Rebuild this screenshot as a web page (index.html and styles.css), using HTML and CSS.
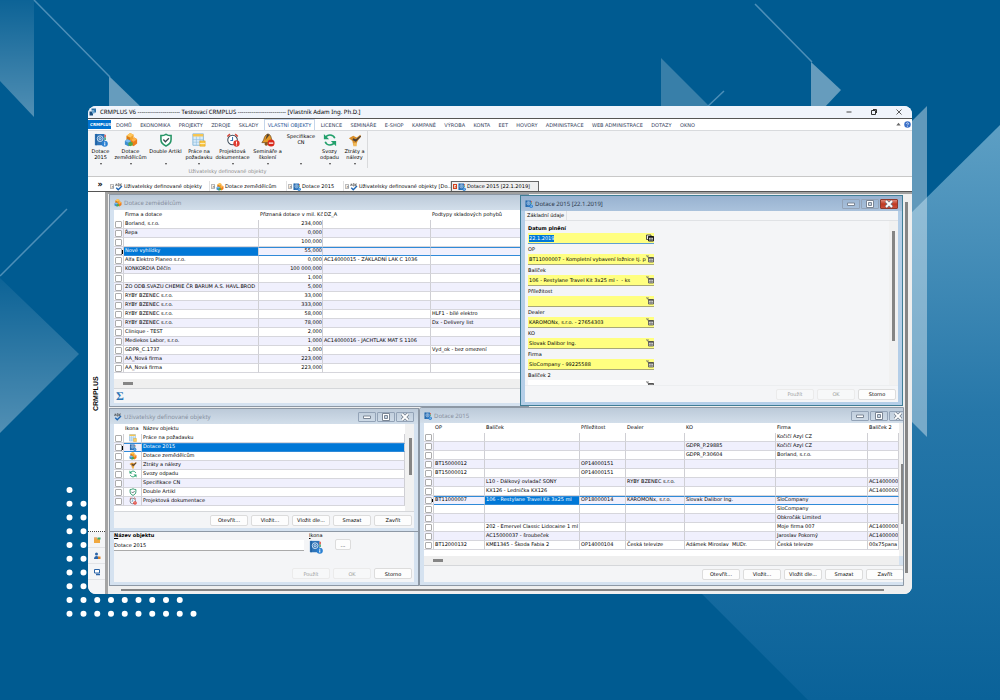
FILE: index.html
```html
<!DOCTYPE html>
<html lang="cs">
<head>
    <meta charset="utf-8">
    <title>CRMPLUS V6</title>
    <link rel="stylesheet" href="styles.css">
</head>
<body>

<!-- icons -->
<svg class="defs" aria-hidden="true">
    <symbol id="book" viewBox="0 0 16 16">
        <path d="M1 1h11v13H1z" fill="#2f74b8"/>
        <path d="M2.500 1v13" stroke="#1d5a98"/>
        <path d="M12 2h1.500v3H12z" fill="#e0493a"/><path d="M12 5h1.500v3H12z" fill="#3aa76d"/>
        <circle cx="7" cy="6.500" r="3.300" fill="none" stroke="#dbe9f7" stroke-width="1"/>
        <circle cx="7" cy="6.500" r="1.300" fill="none" stroke="#dbe9f7"/>
        <circle cx="12.300" cy="12.300" r="3.500" fill="#2a80d2"/>
        <path d="M12.300 10v1M12.300 11.800v2.500" stroke="#fff" stroke-width="1.200"/>
    </symbol>
    <symbol id="cubes" viewBox="0 0 16 16">
        <path d="M3 3l4-3 4 2v6l-4 3-4-2z" fill="#f0a22e"/><path d="M3 3l4 2v6L3 9z" fill="#d97a16"/><path d="M3 3l4-3 4 2-4 3z" fill="#ffc65c"/>
        <path d="M1 9l3-2 4 2v5l-3 1-4-2z" fill="#3d8fd1"/><path d="M1 9l3-2 4 2-3 2z" fill="#7cbcf0"/>
        <path d="M8 8l4-3 3 2v5l-4 3-3-2z" fill="#ee7d1c"/><path d="M8 8l4-3 3 2-4 3z" fill="#ffb347"/>
        <path d="M5 11l3-1 2 1v3l-3 1-2-1z" fill="#57a845"/>
    </symbol>
    <symbol id="shield" viewBox="0 0 16 16">
        <path d="M8 1.500c2 1.300 4 1.500 5.800 1.500v4.500c0 3.500-2.500 6-5.800 7.300C4.700 13.500 2.200 11 2.200 7.500V3C4 3 6 2.800 8 1.500z" fill="#fff" stroke="#279566" stroke-width="1.800"/>
        <path d="M5 7.500l2.300 2.500L11.300 6" fill="none" stroke="#3b4a50" stroke-width="1.500"/>
    </symbol>
    <symbol id="report" viewBox="0 0 16 16">
        <path d="M1 1h12v13H1z" fill="#d9ecfa" stroke="#7fb3d8"/>
        <path d="M1 1h12v3H1z" fill="#f6c552"/>
        <path d="M1 7.500h12M1 10.500h12M5 4v10M9 4v10" stroke="#8fbfe0" stroke-width=".7"/>
        <path d="M9 9h6v6H9z" fill="#f9c846" stroke="#dfa323" stroke-width=".7"/><path d="M9 12h6" stroke="#fff" stroke-width=".7"/>
    </symbol>
    <symbol id="clock" viewBox="0 0 16 16">
        <circle cx="7.500" cy="8" r="5.500" fill="#fff" stroke="#3f4c5a" stroke-width="1.200"/>
        <path d="M1.500 4L4.500 1.300M10.500 1.300L13.500 4" stroke="#d64a3c" stroke-width="1.800"/>
        <path d="M7.500 4.500v4H5" fill="none" stroke="#2f77b5" stroke-width="1.200"/>
        <circle cx="12" cy="12" r="3.600" fill="#e03c31"/><path d="M12 9.800v2.500M12 13v1.200" stroke="#fff" stroke-width="1.200"/>
    </symbol>
    <symbol id="bell" viewBox="0 0 16 16">
        <path d="M8 1c3 1 3.500 3 4 6l2 4H1l2-3c1-4 2-6 5-7z" fill="#e69a26" stroke="#6b4517" stroke-width=".8"/>
        <path d="M7 1l3 1-5 6z" fill="#54422e"/>
        <circle cx="6" cy="12.500" r="2" fill="#8a5a1c"/>
        <circle cx="11.500" cy="11.500" r="4" fill="#d8291c"/><path d="M9 11.500h5" stroke="#fff" stroke-width="1.500"/>
    </symbol>
    <symbol id="recycle" viewBox="0 0 16 16">
        <path d="M13.500 6C12.500 3.500 10.500 2.300 8 2.300S3.800 3.500 2.800 5.500M2.500 10c1 2.500 3 3.700 5.500 3.700s4.200-1.200 5.200-3.200" fill="none" stroke="#22a06b" stroke-width="1.800"/>
        <path d="M1 1v6h6zM15 15V9H9z" fill="#22a06b"/>
    </symbol>
    <symbol id="hand" viewBox="0 0 16 16">
        <path d="M1 6l5-3 4 2 4-3 1 2-4 5-2 5H6L5 9z" fill="#d98f2b"/>
        <path d="M6 6l3 1 5-4 1 1-6 6-4-2z" fill="#4b4038"/>
        <path d="M6 11h4v4H6z" fill="#f0b95a"/>
    </symbol>
    <symbol id="abc" viewBox="0 0 16 16">
        <path d="M1 6l1.500-4.500L4 6M6 1.500V6h2.500V1.500zM14 2h-3v4h3" fill="none" stroke="#222" stroke-width="1"/>
        <path d="M2.500 9.500l4 4L14 6" fill="none" stroke="#1e66b4" stroke-width="2.800"/>
    </symbol>
    <symbol id="pick" viewBox="0 0 16 16">
        <path d="M1 1l4 5M1 2h5" stroke="#666" stroke-width="1.500" fill="none"/>
        <path d="M5 5h10v9H5z" fill="#ddd" stroke="#444" stroke-width="1.500"/><path d="M5 6h10" stroke="#444" stroke-width="2.500"/>
        <path d="M6 11h8M8.500 8v6M11.500 8v6" stroke="#666"/>
    </symbol>
    <symbol id="date" viewBox="0 0 16 16">
        <path d="M1 2h9v9H1z" fill="#eee" stroke="#222" stroke-width="1.500"/>
        <path d="M5 5h10v9H5z" fill="#ddd" stroke="#111" stroke-width="1.800"/><path d="M5 6h10" stroke="#111" stroke-width="3"/>
        <path d="M6 11.500h8M8.500 8v6M11.500 8v6" stroke="#333"/>
    </symbol>
    <symbol id="min" viewBox="0 0 16 8"><path d="M4.500 3h7v2.500h-7z" fill="#fff" stroke="#7b8695"/></symbol>
    <symbol id="max" viewBox="0 0 16 8"><path d="M4.500 .5h7v7h-7z" fill="#fff" stroke="#7b8695"/><path d="M6.500 2.500h3v3h-3z" fill="#c9d6e4" stroke="#7b8695"/></symbol>
    <symbol id="close" viewBox="0 0 16 8"><path d="M5 1l6 6M11 1l-6 6" stroke="#6d7886" stroke-width="3.200"/><path d="M5 1l6 6M11 1l-6 6" stroke="#fff" stroke-width="1.900"/></symbol>
</svg>

<!-- backdrop -->
<svg class="backdrop" viewBox="0 0 1000 700" preserveAspectRatio="xMidYMid slice" aria-hidden="true">
    <defs>
        <linearGradient id="fadeUp" x1="0" y1="0" x2="0" y2="1"><stop offset="0" stop-color="#fff" stop-opacity=".05"/><stop offset="1" stop-color="#fff" stop-opacity=".32"/></linearGradient>
        <linearGradient id="big" x1="0" y1="0" x2="0" y2="1"><stop offset="0" stop-color="#5d9fc4"/><stop offset=".5" stop-color="#2677a9"/><stop offset="1" stop-color="#0a6299"/></linearGradient>
    </defs>
    <path d="M0 0h34v117L0 81z" fill="url(#fadeUp)"/>
    <path d="M109 76l33 32h-33z" fill="#fff" fill-opacity=".4"/>
    <path d="M0 278l79 76-79 79z" fill="url(#fadeUp)"/>
    <path d="M661 58l49 49h-49z" fill="#fff" fill-opacity=".22"/>
    <path d="M811 62l30 28-17 18h-13z" fill="#fff" fill-opacity=".4"/>
    <path d="M1000 125L702 420v174l106 106h192z" fill="url(#big)"/>
    <path d="M927 106v331l-20-20V126z" fill="#fff" fill-opacity=".38"/>
    <path d="M34 0l76 77M0 276l67-67M755 4l57 58M706 108l18-17" fill="none" stroke="#4d8fb8" stroke-width="1.500"/>
    <g stroke="#fff" stroke-width="6" stroke-linecap="round" stroke-dasharray="0 13.750" fill="none">
        <path d="M69.500 490v125"/><path d="M83.500 503.750v112"/>
        <path d="M97.250 600h86"/><path d="M97.250 613.750h100"/>
    </g>
</svg>

<main class="app">
    <header class="titlebar">
        <svg class="logo" viewBox="0 0 16 16"><path d="M5 1h9v8h-4V5H5z" fill="#2a6fa5"/><path d="M1 7h7v8H1z" fill="#1b4f80"/><path d="M6 5h5v6H6z" fill="#6fa9d4"/></svg>
        <span class="caption">CRMPLUS V6 ---------------------- Testovací CRMPLUS ------------------------- [Vlastník Adam Ing. Ph.D.]</span>
        <button aria-label="Minimalizovat"><svg viewBox="0 0 8 8"><path d="M1.500 4h5" stroke="#444"/></svg></button>
        <button aria-label="Obnovit"><svg viewBox="0 0 8 8"><path d="M1.500 2.500h4v4h-4zM3 1.500h3.500V5" fill="none" stroke="#333"/></svg></button>
        <button aria-label="Zavřít"><svg viewBox="0 0 8 8"><path d="M1.500 1.500l5 5M6.500 1.500l-5 5" stroke="#333" stroke-width=".8"/></svg></button>
    </header>

    <nav class="menu">
        <a class="file" href="#">CRMPLUS</a>
        <div class="items">
            <a href="#">DOMŮ</a>
            <a href="#">EKONOMIKA</a>
            <a href="#">PROJEKTY</a>
            <a href="#">ZDROJE</a>
            <a href="#">SKLADY</a>
            <a class="active" href="#">VLASTNÍ OBJEKTY</a>
            <a href="#">LICENCE</a>
            <a href="#">SEMINÁŘE</a>
            <a href="#">E-SHOP</a>
            <a href="#">KAMPANĚ</a>
            <a href="#">VÝROBA</a>
            <a href="#">KONTA</a>
            <a href="#">EET</a>
            <a href="#">HOVORY</a>
            <a href="#">ADMINISTRACE</a>
            <a href="#">WEB ADMINISTRACE</a>
            <a href="#">DOTAZY</a>
            <a href="#">OKNO</a>
        </div>
        <span class="help">
            <svg viewBox="0 0 8 8"><path d="M1.500 5L4 2l2.500 3z" fill="#666"/></svg>
            <svg viewBox="0 0 8 8"><circle cx="4" cy="4" r="3.700" fill="#3a70c8"/><path d="M2.800 3.200c0-1.600 2.400-1.500 2.400 0 0 .8-1.200.8-1.200 1.700M4 5.600v.9" fill="none" stroke="#fff" stroke-width=".8"/></svg>
        </span>
    </nav>

    <section class="ribbon">
        <div class="group">
            <div class="tools">
                <button class="w24"><svg><use href="#book"/></svg><span>Dotace<br>2015</span><i></i></button>
                <button class="w36"><svg><use href="#cubes"/></svg><span>Dotace<br>zemědělcům</span><i></i></button>
                <button class="w36"><svg><use href="#shield"/></svg><span>Double Artikl</span><i></i></button>
                <button class="w32"><svg><use href="#report"/></svg><span>Práce na<br>požadavku</span><i></i></button>
                <button class="w36"><svg><use href="#clock"/></svg><span>Projektová<br>dokumentace</span><i></i></button>
                <button class="w36"><svg><use href="#bell"/></svg><span>Semináře a<br>školení</span><i></i></button>
                <button class="w32"><span>Specifikace<br>CN</span><i></i></button>
                <button class="w24"><svg><use href="#recycle"/></svg><span>Svozy<br>odpadu</span><i></i></button>
                <button class="w24"><svg><use href="#hand"/></svg><span>Ztráty a<br>nálezy</span><i></i></button>
            </div>
            <div class="groupname">Uživatelsky definované objekty</div>
        </div>
    </section>

    <nav class="doctabs">
        <button class="expand" aria-label="Rozbalit">»</button>
        <a class="t1" href="#"><b>×</b><svg><use href="#abc"/></svg>Uživatelsky definované objekty</a>
        <a class="t2" href="#"><b>×</b><svg><use href="#cubes"/></svg>Dotace zemědělcům</a>
        <a class="t3" href="#"><b>×</b><svg><use href="#book"/></svg>Dotace 2015</a>
        <a class="t4" href="#"><b>×</b><svg><use href="#abc"/></svg>Uživatelsky definované objekty [Do...</a>
        <a class="t5 active" href="#"><b>×</b><svg><use href="#book"/></svg>Dotace 2015 [22.1.2019]</a>
    </nav>

    <div class="body">
        <aside class="side">
            <div class="sidename">CRMPLUS</div>
            <button aria-label="Složky"><svg viewBox="0 0 8 8"><path d="M1 2.500h6V7H1z" fill="#f0a840"/><path d="M1 1.500h3v1H1z" fill="#d9822b"/><path d="M4.500 1.500h3v2h-3z" fill="#3aa76d"/></svg></button>
            <button aria-label="Kontakty"><svg viewBox="0 0 8 8"><circle cx="3.500" cy="2" r="1.500" fill="#2c65a8"/><path d="M1 7c0-4 5-4 5 0z" fill="#2c65a8"/><path d="M5 4.500h2.500V7H5z" fill="#d9822b"/></svg></button>
            <button aria-label="Počítač"><svg viewBox="0 0 8 8"><path d="M1.500 1.500h5v3.500h-5z" fill="#fff" stroke="#2c65a8"/><path d="M3 6.500h4" stroke="#2c65a8" stroke-width="1.500"/></svg></button>
            <div class="sideend"></div>
        </aside>

        <div class="desktop">
            <div class="vbar"></div>
            <div class="hbar"></div>

            <section class="win farms">
                <h2><svg><use href="#cubes"/></svg>Dotace zemědělcům</h2>
                <div class="pane">
                    <table>
                        <colgroup><col class="c10"><col class="c135"><col class="c64"><col class="c108"><col></colgroup>
                        <thead><tr><th></th><th>Firma a dotace</th><th class="num">Přiznaná dotace v mil. Kč</th><th>DZ_A</th><th>Podtypy skladových pohybů</th></tr></thead>
                        <tbody>
                            <tr><td><input type="checkbox" aria-label="Vybrat"></td><td>Borland, s.r.o.</td><td class="num">234,000</td><td></td><td></td></tr>
                            <tr><td><input type="checkbox" aria-label="Vybrat"></td><td>Řepa</td><td class="num">0,000</td><td></td><td></td></tr>
                            <tr><td><input type="checkbox" aria-label="Vybrat"></td><td></td><td class="num">100,000</td><td></td><td></td></tr>
                            <tr class="cur"><td><input type="checkbox" aria-label="Vybrat"></td><td class="sel">Nové vyhlídky</td><td class="num">55,000</td><td></td><td></td></tr>
                            <tr><td><input type="checkbox" aria-label="Vybrat"></td><td>Alfa Elektro Planeo s.r.o.</td><td class="num">0,000</td><td>AC14000015 - ZÁKLADNÍ LAK C 1036</td><td></td></tr>
                            <tr><td><input type="checkbox" aria-label="Vybrat"></td><td>KONKORDIA Děčín</td><td class="num">100 000,000</td><td></td><td></td></tr>
                            <tr><td><input type="checkbox" aria-label="Vybrat"></td><td></td><td class="num">1,000</td><td></td><td></td></tr>
                            <tr><td><input type="checkbox" aria-label="Vybrat"></td><td>ZO ODB.SVAZU CHEMIE ČR BARUM A.S. HAVL.BROD</td><td class="num">5,000</td><td></td><td></td></tr>
                            <tr><td><input type="checkbox" aria-label="Vybrat"></td><td>RYBY BZENEC s.r.o.</td><td class="num">33,000</td><td></td><td></td></tr>
                            <tr><td><input type="checkbox" aria-label="Vybrat"></td><td>RYBY BZENEC s.r.o.</td><td class="num">333,000</td><td></td><td></td></tr>
                            <tr><td><input type="checkbox" aria-label="Vybrat"></td><td>RYBY BZENEC s.r.o.</td><td class="num">58,000</td><td></td><td>HLF1 - bílé elektro</td></tr>
                            <tr><td><input type="checkbox" aria-label="Vybrat"></td><td>RYBY BZENEC s.r.o.</td><td class="num">78,000</td><td></td><td>Dx - Delivery list</td></tr>
                            <tr><td><input type="checkbox" aria-label="Vybrat"></td><td>Clinique - TEST</td><td class="num">2,000</td><td></td><td></td></tr>
                            <tr><td><input type="checkbox" aria-label="Vybrat"></td><td>Mediekos Labor, s.r.o.</td><td class="num">1,000</td><td>AC14000016 - JACHTLAK MAT S 1106</td><td></td></tr>
                            <tr><td><input type="checkbox" aria-label="Vybrat"></td><td>GDPR_C.1737</td><td class="num">1,000</td><td></td><td>Vyd_ok - bez omezení</td></tr>
                            <tr><td><input type="checkbox" aria-label="Vybrat"></td><td>AA_Nová firma</td><td class="num">223,000</td><td></td><td></td></tr>
                            <tr><td><input type="checkbox" aria-label="Vybrat"></td><td>AA_Nová firma</td><td class="num">223,000</td><td></td><td></td></tr>
                        </tbody>
                    </table>
                </div>
                <div class="scroll"></div>
                <footer class="sum">Σ</footer>
            </section>

            <section class="win detail">
                <div class="pane edit">
                    <div class="pair">
                        <label for="objname"><u>N</u>ázev objektu</label>
                        <input type="text" id="objname" value="Dotace 2015">
                    </div>
                    <div class="pair">
                        <span><u>I</u>kona</span>
                        <svg><use href="#book"/></svg>
                    </div>
                    <button class="btn dots">...</button>
                </div>
                <footer>
                    <button class="btn" disabled>Použít</button>
                    <button class="btn" disabled>OK</button>
                    <button class="btn">Storno</button>
                </footer>
            </section>

            <section class="win objects">
                <h2><svg><use href="#abc"/></svg>Uživatelsky definované objekty
                    <span class="ctl"><button aria-label="Minimalizovat"><svg><use href="#min"/></svg></button><button aria-label="Maximalizovat"><svg><use href="#max"/></svg></button><button aria-label="Zavřít"><svg><use href="#close"/></svg></button></span>
                </h2>
                <div class="pane">
                    <table>
                        <colgroup><col class="c10"><col class="c18"><col></colgroup>
                        <thead><tr><th></th><th>Ikona</th><th>Název objektu</th></tr></thead>
                        <tbody>
                            <tr><td><input type="checkbox" aria-label="Vybrat"></td><td class="ico"><svg><use href="#report"/></svg></td><td>Práce na požadavku</td></tr>
                            <tr class="cur"><td><input type="checkbox" aria-label="Vybrat"></td><td class="ico"><svg><use href="#book"/></svg></td><td class="sel">Dotace 2015</td></tr>
                            <tr><td><input type="checkbox" aria-label="Vybrat"></td><td class="ico"><svg><use href="#cubes"/></svg></td><td>Dotace zemědělcům</td></tr>
                            <tr><td><input type="checkbox" aria-label="Vybrat"></td><td class="ico"><svg><use href="#hand"/></svg></td><td>Ztráty a nálezy</td></tr>
                            <tr><td><input type="checkbox" aria-label="Vybrat"></td><td class="ico"><svg><use href="#recycle"/></svg></td><td>Svozy odpadu</td></tr>
                            <tr><td><input type="checkbox" aria-label="Vybrat"></td><td class="ico"></td><td>Specifikace CN</td></tr>
                            <tr><td><input type="checkbox" aria-label="Vybrat"></td><td class="ico"><svg><use href="#shield"/></svg></td><td>Double Artikl</td></tr>
                            <tr><td><input type="checkbox" aria-label="Vybrat"></td><td class="ico"><svg><use href="#clock"/></svg></td><td>Projektová dokumentace</td></tr>
                        </tbody>
                    </table>
                    <div class="vscroll"></div>
                </div>
                <footer>
                    <button class="btn">Otevřít...</button>
                    <button class="btn">Vložit...</button>
                    <button class="btn">Vložit dle...</button>
                    <button class="btn">Smazat</button>
                    <button class="btn">Zavřít</button>
                </footer>
            </section>

            <section class="win grants">
                <h2><svg><use href="#book"/></svg>Dotace 2015
                    <span class="ctl"><button aria-label="Minimalizovat"><svg><use href="#min"/></svg></button><button aria-label="Maximalizovat"><svg><use href="#max"/></svg></button><button aria-label="Zavřít"><svg><use href="#close"/></svg></button></span>
                </h2>
                <div class="pane">
                    <table>
                        <colgroup><col class="c10"><col class="c51"><col class="c95"><col class="c46"><col class="c59"><col class="c91"><col class="c92"><col></colgroup>
                        <thead><tr><th></th><th>OP</th><th>Balíček</th><th>Příležitost</th><th>Dealer</th><th>KO</th><th>Firma</th><th>Balíček 2</th></tr></thead>
                        <tbody>
                            <tr><td><input type="checkbox" aria-label="Vybrat"></td><td></td><td></td><td></td><td></td><td></td><td>Kočičí Azyl CZ</td><td></td></tr>
                            <tr><td><input type="checkbox" aria-label="Vybrat"></td><td></td><td></td><td></td><td></td><td>GDPR_P.29885</td><td>Kočičí Azyl CZ</td><td></td></tr>
                            <tr><td><input type="checkbox" aria-label="Vybrat"></td><td></td><td></td><td></td><td></td><td>GDPR_P.30604</td><td>Borland, s.r.o.</td><td></td></tr>
                            <tr><td><input type="checkbox" aria-label="Vybrat"></td><td>BT15000012</td><td></td><td>OP14000151</td><td></td><td></td><td></td><td></td></tr>
                            <tr><td><input type="checkbox" aria-label="Vybrat"></td><td>BT15000012</td><td></td><td>OP14000151</td><td></td><td></td><td></td><td></td></tr>
                            <tr><td><input type="checkbox" aria-label="Vybrat"></td><td></td><td>L10 - Dálkový ovladač SONY</td><td></td><td>RYBY BZENEC s.r.o.</td><td></td><td></td><td>AC1400000</td></tr>
                            <tr><td><input type="checkbox" aria-label="Vybrat"></td><td></td><td>KX126 - Lednička KX126</td><td></td><td></td><td></td><td></td><td>AC1400000</td></tr>
                            <tr class="cur"><td><input type="checkbox" aria-label="Vybrat"></td><td>BT11000007</td><td class="sel">106 - Restylane Travel Kit 3x25 ml</td><td>OP18000014</td><td>KAROMONx, s.r.o.</td><td>Slovak Dalibor Ing.</td><td>SloCompany</td><td></td></tr>
                            <tr><td><input type="checkbox" aria-label="Vybrat"></td><td></td><td></td><td></td><td></td><td></td><td>SloCompany</td><td></td></tr>
                            <tr><td><input type="checkbox" aria-label="Vybrat"></td><td></td><td></td><td></td><td></td><td></td><td>Obkročák Limited</td><td></td></tr>
                            <tr><td><input type="checkbox" aria-label="Vybrat"></td><td></td><td>202 - Emervel Classic Lidocaine 1 ml</td><td></td><td></td><td></td><td>Moje firma 007</td><td>AC1400000</td></tr>
                            <tr><td><input type="checkbox" aria-label="Vybrat"></td><td></td><td>AC15000037 - šroubeček</td><td></td><td></td><td></td><td>Jaroslav Pokorný</td><td>AC1400000</td></tr>
                            <tr><td><input type="checkbox" aria-label="Vybrat"></td><td>BT12000132</td><td>KME1345 - Škoda Fabia 2</td><td>OP14000104</td><td>Česká televize</td><td>Adámek Miroslav  MUDr.</td><td>Česká televize</td><td>00x75pana</td></tr>
                        </tbody>
                    </table>
                    <div class="vscroll"></div>
                </div>
                <div class="scroll"></div>
                <footer>
                    <button class="btn">Otevřít...</button>
                    <button class="btn">Vložit...</button>
                    <button class="btn">Vložit dle...</button>
                    <button class="btn">Smazat</button>
                    <button class="btn">Zavřít</button>
                </footer>
            </section>

            <section class="win dialog">
                <h2><svg><use href="#book"/></svg>Dotace 2015 [22.1.2019]
                    <span class="ctl"><button aria-label="Minimalizovat"><svg><use href="#min"/></svg></button><button aria-label="Maximalizovat"><svg><use href="#max"/></svg></button><button class="red" aria-label="Zavřít"><svg><use href="#close"/></svg></button></span>
                </h2>
                <div class="tabstrip"><a href="#">Základní údaje</a></div>
                <form class="pane form">
                    <div class="fields">
                        <div class="field date"><label for="f1">Datum plnění</label><div><input type="text" id="f1" value="22.1.2019"><button type="button" aria-label="Kalendář"><svg><use href="#date"/></svg></button></div></div>
                        <div class="field"><label for="f2">OP</label><div><input type="text" id="f2" value="BT11000007 - Kompletní vybavení ložnice tj. postel"><button type="button" aria-label="Vybrat"><svg><use href="#pick"/></svg></button></div></div>
                        <div class="field"><label for="f3">Balíček</label><div><input type="text" id="f3" value="106 - Restylane Travel Kit 3x25 ml -  - ks"><button type="button" aria-label="Vybrat"><svg><use href="#pick"/></svg></button></div></div>
                        <div class="field"><label for="f4">Příležitost</label><div><input type="text" id="f4" value=""><button type="button" aria-label="Vybrat"><svg><use href="#pick"/></svg></button></div></div>
                        <div class="field"><label for="f5">Dealer</label><div><input type="text" id="f5" value="KAROMONx, s.r.o. - 27654303"><button type="button" aria-label="Vybrat"><svg><use href="#pick"/></svg></button></div></div>
                        <div class="field"><label for="f6">KO</label><div><input type="text" id="f6" value="Slovak Dalibor Ing."><button type="button" aria-label="Vybrat"><svg><use href="#pick"/></svg></button></div></div>
                        <div class="field"><label for="f7">Firma</label><div><input type="text" id="f7" value="SloCompany - 99225588"><button type="button" aria-label="Vybrat"><svg><use href="#pick"/></svg></button></div></div>
                        <div class="field plain"><label for="f8">Balíček 2</label><div><input type="text" id="f8" value=""><button type="button" aria-label="Vybrat"><svg><use href="#pick"/></svg></button></div></div>
                    </div>
                    <div class="vscroll"></div>
                </form>
                <footer>
                    <button class="btn" disabled>Použít</button>
                    <button class="btn" disabled>OK</button>
                    <button class="btn">Storno</button>
                </footer>
            </section>
        </div>
    </div>
</main>

</body>
</html>
```

FILE: styles.css
```css
* {
  box-sizing: border-box;
}

body {
  margin: 0;
  min-height: 100vh;
  padding: 106px 88px;
  display: flex;
  background: #005b91;
  font-family: "DejaVu Sans", Verdana, sans-serif;
  font-size: 5px;
  line-height: 8px;
  color: #000;
  text-rendering: geometricPrecision;
}

button, input {
  font: inherit;
  color: inherit;
  margin: 0;
  padding: 0;
  border: 0;
  background: none;
}

a {
  color: inherit;
  text-decoration: none;
}

svg {
  display: block;
  flex-shrink: 0;
}

.defs {
  position: absolute;
  width: 0;
  height: 0;
}

.backdrop {
  position: absolute;
  left: 0;
  top: 0;
  width: 100%;
  height: 100%;
}

.app {
  position: relative;
  flex: 1;
  min-width: 0;
  display: flex;
  flex-direction: column;
  overflow: hidden;
  border-radius: 8px;
  background: #fff;
}

/* title bar */
.titlebar {
  display: flex;
  align-items: center;
  height: 13px;
  padding: 0 9px 0 1px;
  background: #f0f4fb;
  border-bottom: 1px solid #555;
}

.titlebar .logo {
  width: 8px;
  height: 8px;
  margin-right: 3px;
}

.titlebar .caption {
  flex: 1;
  font-family: "Noto Sans", sans-serif;
  font-size: 6px;
}

.titlebar button {
  margin-left: 17px;
}

.titlebar button svg {
  width: 8px;
  height: 8px;
}

/* menu */
.menu {
  display: flex;
  height: 12px;
  border-bottom: 1px solid #d8dadd;
  color: #33415c;
}

.items {
  display: flex;
  justify-content: space-between;
  width: 71%;
}

.menu a {
  padding: 3px 3px 0;
  line-height: 9px;
  white-space: nowrap;
}

.menu a.file {
  width: 23px;
  height: 9px;
  margin: 1px 2px 0 0;
  padding: 0 2px;
  background: #0072cf;
  color: #fff;
  font-weight: bold;
  font-size: 4px;
}

.menu a.active {
  padding: 2px 3px 0;
  border: 1px solid #c5d5ea;
  border-bottom: 0;
  color: #2b579a;
}

.menu .help {
  display: flex;
  gap: 2px;
  margin: 2px 1px 0 auto;
}

.menu .help svg {
  width: 7px;
  height: 7px;
}

/* ribbon */
.ribbon {
  display: flex;
  height: 46px;
  background: #f4f5f7;
  border-bottom: 1px solid #c8c8c8;
}

.group {
  padding-right: 1px;
  background: linear-gradient(#d9dadc, #d9dadc) right top / 1px 37px no-repeat;
}

.tools {
  display: flex;
  height: 36px;
}

.tools button {
  display: flex;
  flex-direction: column;
  align-items: center;
  padding-top: 2px;
  line-height: 6px;
  text-align: center;
  white-space: nowrap;
}

.tools svg {
  width: 14px;
  height: 14px;
  margin-bottom: 1px;
}

.tools i {
  margin: auto 0 2px;
  border: 1px solid transparent;
  border-top: 2px solid #444;
  border-bottom: 0;
}

.w24 { width: 25px; }
.w32 { width: 32px; }
.w36 { width: 35px; }

.groupname {
  text-align: center;
  line-height: 10px;
  color: #8a8a8a;
}

/* document tabs */
.doctabs {
  display: flex;
  height: 15px;
  padding-top: 4px;
  border-bottom: 1px solid #555;
}

.doctabs .expand {
  width: 21px;
  padding: 0 0 5px 3px;
  font-size: 8px;
  font-weight: bold;
}

.doctabs a {
  display: flex;
  align-items: center;
  gap: 1px;
  padding: 1px 0 0 1px;
  white-space: nowrap;
  border-right: 1px solid #e2e2e2;
}

.doctabs svg {
  width: 8px;
  height: 8px;
}

.doctabs b {
  width: 4px;
  height: 5px;
  border: 1px solid #bbb;
  font-size: 4px;
  line-height: 3px;
  color: #777;
}

.doctabs .t1 { width: 101px; }
.doctabs .t2 { width: 77px; }
.doctabs .t3 { width: 57px; }
.doctabs .t4 { width: 107px; }
.doctabs .t5 { width: 88px; }

.doctabs a.active {
  border: 1px solid #666;
  border-bottom: 0;
  padding-top: 0;
  background: #efefef;
}

.doctabs a.active b {
  border-color: #d2401e;
  color: #d2401e;
}

/* left strip */
.body {
  flex: 1;
  display: flex;
  min-height: 402px;
}

.side {
  display: flex;
  flex-direction: column;
  width: 20px;
  border-right: 3px solid #a4a4a4;
}

.sidename {
  flex: 1;
  display: flex;
  align-items: center;
  justify-content: center;
  padding-bottom: 64px;
  writing-mode: vertical-rl;
  transform: rotate(180deg);
  border-top: 1px dotted #444;
  font-family: "Liberation Sans", Arial, sans-serif;
  font-weight: bold;
  font-size: 7px;
}

.side button {
  display: flex;
  align-items: center;
  justify-content: center;
  height: 16px;
  background: #f4f5f7;
  border-bottom: 1px solid #e2e3e6;
}

.side button svg {
  width: 8px;
  height: 8px;
}

.sideend {
  height: 14px;
  background: #f4f5f7;
}

/* desktop with windows */
.desktop {
  position: relative;
  flex: 1;
  overflow: hidden;
  background: #efefef;
  border-top: 2px solid #a0a0a0;
}

.vbar {
  position: absolute;
  right: 4px;
  top: 8px;
  bottom: 21px;
  width: 3px;
  background: #858585;
}

.hbar {
  position: absolute;
  left: 13px;
  right: 28px;
  bottom: 3px;
  height: 2px;
  background: #858585;
}

.win {
  position: absolute;
  display: flex;
  flex-direction: column;
  padding: 0 4px 3px;
  background: #d5e2f0;
  border: 1px solid #8d98a5;
  overflow: hidden;
}

.win h2 {
  display: flex;
  align-items: center;
  height: 15px;
  margin: 0 -4px;
  padding: 0 4px;
  background: linear-gradient(#bccad9, #d2deea);
  font-family: "Noto Sans", sans-serif;
  font-size: 6px;
  font-weight: normal;
  color: #8790a0;
}

.win h2 > svg {
  width: 8px;
  height: 8px;
  margin-right: 2px;
}

.ctl {
  display: flex;
  gap: 1px;
  margin-left: auto;
}

.ctl button {
  width: 18px;
  height: 10px;
  border: 1px solid #93a3b7;
  border-radius: 1px;
}

.ctl svg {
  width: 16px;
  height: 8px;
}

.ctl .red {
  background: linear-gradient(#dd8a7c, #c03a22 50%, #c9503c);
  border-color: #8e3a2e;
}

.pane {
  display: flex;
  flex: 1;
  background: #fff;
  min-height: 0;
}

.farms {
  left: 1px;
  top: 0;
  width: 420px;
  height: 213px;
}

.objects {
  left: 1px;
  top: 214px;
  width: 310px;
  height: 124px;
}

.detail {
  left: 1px;
  top: 337px;
  width: 310px;
  height: 55px;
}

.grants {
  left: 311px;
  right: 8px;
  top: 213px;
  height: 179px;
  border-radius: 3px 0 0 0;
}

.dialog {
  left: 412px;
  right: 9px;
  top: 1px;
  height: 211px;
  background: #b4cee8;
  border-color: #3f7d95;
}

/* grids */
table {
  flex: 1;
  width: 100%;
  align-self: flex-start;
  table-layout: fixed;
  border-collapse: separate;
  border-spacing: 0;
}

.c10 { width: 10px; }
.c18 { width: 18px; }
.c46 { width: 46px; }
.c51 { width: 51px; }
.c59 { width: 59px; }
.c64 { width: 64px; }
.c91 { width: 91px; }
.c92 { width: 92px; }
.c95 { width: 95px; }
.c108 { width: 108px; }
.c135 { width: 135px; }

th, td {
  height: 9px;
  padding: 0 0 0 1px;
  line-height: 8px;
  text-align: left;
  white-space: pre;
  overflow: hidden;
}

th {
  height: 10px;
  font-weight: normal;
}

td {
  border-right: 1px solid #cfcfd4;
  border-bottom: 1px solid #d6d6dc;
}

tbody tr:nth-child(even) {
  background: #f0f0fd;
}

.num {
  text-align: right;
}

th.num {
  padding-right: 1px;
}

td input[type="checkbox"] {
  appearance: none;
  display: block;
  width: 7px;
  height: 7px;
  border: 1px solid #adadad;
  border-radius: 1px;
  background: #fff;
}

.ico svg {
  width: 8px;
  height: 8px;
  margin: 0 auto;
}

.cur td {
  border-top: 1px solid #2f8ad8;
  border-bottom: 1px solid #2f8ad8;
  line-height: 7px;
}

.cur .ico svg {
  height: 7px;
}

.cur td:first-child {
  border-top: 0;
  border-bottom-color: #d6d6dc;
  background: linear-gradient(45deg, #000 50%, transparent 50%) 7px 2px / 3px 3px no-repeat, linear-gradient(135deg, #000 50%, transparent 50%) 7px 5px / 3px 3px no-repeat;
}

.cur td.sel {
  background: #0078d7;
  color: #fff;
}

.vscroll {
  width: 9px;
  background: linear-gradient(#858585, #858585) 4px 14px / 3px 37px no-repeat, #f1f1f1;
}

.scroll {
  height: 9px;
  background: linear-gradient(#858585, #858585) 9px 3px / 10px 3px no-repeat, #efefef;
}

.grants h2 {
  margin-right: -12px;
}

.grants .pane {
  margin-right: -4px;
}

.grants .vscroll {
  width: 4px;
  background: linear-gradient(#858585, #858585) 2px 41px / 2px 60px no-repeat, #f1f1f1;
}

/* window footers */
footer {
  display: flex;
  align-items: center;
  justify-content: flex-end;
  gap: 3px;
  height: 17px;
  padding-right: 2px;
  background: #f4f5f7;
  border-top: 1px solid #d5d7da;
}

.grants footer {
  margin-right: -5px;
  padding-right: 0;
}

footer.sum {
  justify-content: flex-start;
  height: 15px;
  padding-left: 2px;
  font-family: "Liberation Serif", serif;
  font-size: 12px;
  font-weight: bold;
  color: #2b74b5;
}

.btn {
  width: 38px;
  height: 11px;
  background: #fdfdfd;
  border: 1px solid #dcdcdc;
  border-radius: 2px;
}

.btn:disabled {
  color: #a0a0a0;
  background: #f7f8f9;
  border-color: #ebebeb;
}

/* object detail */
.edit {
  gap: 5px;
  background: #f4f5f7;
}

.pair label {
  display: block;
  font-weight: bold;
}

.pair:first-child {
  flex: 0 1 190px;
}

.pair input {
  display: block;
  width: 100%;
  height: 11px;
  background: #fff;
  border-bottom: 1px solid #aaa;
}

.pair svg {
  width: 14px;
  height: 14px;
}

.btn.dots {
  width: 16px;
  margin: 7px 0 0 7px;
}

.detail footer {
  border-top: 0;
}

/* edit dialog */
.dialog h2 {
  background: linear-gradient(#98b2d0, #aac2dc);
  color: #2d3a4c;
}

.tabstrip {
  height: 10px;
  background: #f4f5f7;
  border-bottom: 1px solid #e0e2e5;
}

.tabstrip a {
  display: block;
  width: 42px;
  padding-left: 2px;
  border-right: 1px solid #e0e2e5;
  line-height: 10px;
}

.form {
  overflow: hidden;
  background: #f4f5f7;
}

.fields {
  flex: 1;
  padding: 3px 3px 0;
}

.field {
  height: 21px;
}

.field label {
  display: block;
  height: 9px;
  line-height: 10px;
}

.field > div {
  display: flex;
  align-items: center;
  width: 126px;
  height: 11px;
  background: #ffff80;
  border-bottom: 1px solid #a8a878;
}

.field input {
  flex: 1;
  min-width: 0;
  height: 9px;
  padding-left: 1px;
}

.field svg {
  width: 8px;
  height: 8px;
}

.date label {
  font-weight: bold;
}

.date > div {
  border-bottom-color: #5f9fd0;
}

.date input {
  background: linear-gradient(#0078d7, #0078d7) 1px 1px / 25px 7px no-repeat;
  color: #fff;
}

.plain > div {
  background: #fff;
}

.form .vscroll {
  background: linear-gradient(#858585, #858585) 3px 10px / 3px 110px no-repeat, #f1f1f1;
}

.dialog footer {
  border-top-color: #eceef0;
}
```
